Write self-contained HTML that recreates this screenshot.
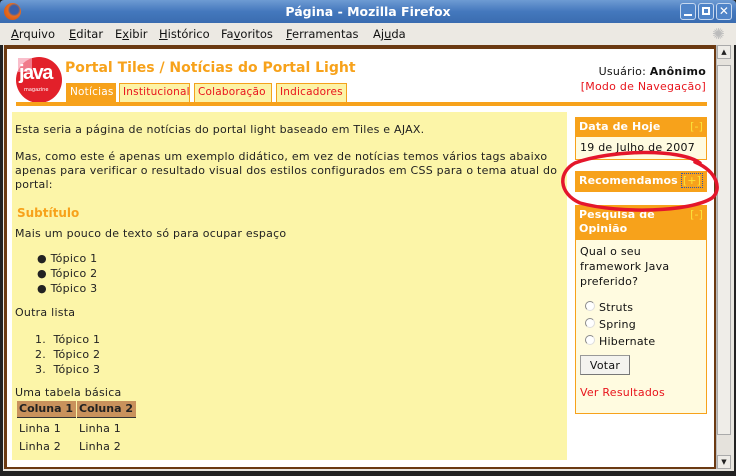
<!DOCTYPE html>
<html><head><meta charset="utf-8">
<style>
*{margin:0;padding:0;box-sizing:border-box}
body{width:736px;height:476px;overflow:hidden;background:#222;font-family:"DejaVu Sans","Liberation Sans",sans-serif;font-size:11px;color:#222;position:relative;letter-spacing:.24px}
.a{position:absolute;white-space:nowrap}
#title{left:0;top:0;width:736px;height:23px;background:linear-gradient(#6e9bd3,#4478bd 50%,#3a6cb0);border-radius:4px 4px 0 0}
#menu{left:0;top:23px;width:736px;height:22px;background:#ece9e3;font-size:11.5px;color:#111;letter-spacing:0}
#menu span{position:absolute;top:4px}
#frame{left:3px;top:45px;width:731px;height:426px;background:#e8e6e0}
#brown{left:4px;top:45px;width:712px;height:424px;background:#6b3a12}
#page{left:7px;top:49px;width:707px;height:418px;background:#fff}
#sb{left:716px;top:45px;width:15px;height:424px;background:#e5e2dc;border-left:1px solid #bbb}
.tab{position:absolute;top:83px;height:19px;background:#fcf3a6;border:1px solid #f3a21c;border-bottom:none;color:#e8141c;font-size:10.5px;padding:2px 0 0 3px;letter-spacing:.2px}
.bh{position:absolute;left:575px;width:132px;background:#f7a21b;color:#fff;font-weight:bold;font-size:11px;padding:3px 4px;letter-spacing:.1px}
.bh i{position:absolute;right:4px;top:3px;font-style:normal;color:#fbe23a;font-weight:normal}
.bb{position:absolute;left:575px;width:132px;background:#fffbe0;border:1px solid #f7a21b;border-top:none}
.btn{position:absolute;left:580px;top:355px;width:50px;height:20px;background:#f4f3ef;border:1px solid #999;border-right-color:#777;border-bottom-color:#777;font-size:11px;text-align:center;padding-top:3px;color:#111}
.rad{position:absolute;left:585px;width:10px;height:10px;border-radius:50%;background:#fff;border:1px solid #888;border-right-color:#ddd;border-bottom-color:#ddd}
</style></head><body>
<div class="a" id="title"></div>
<div class="a" style="left:4px;top:3px;width:17px;height:17px;border-radius:50%;background:radial-gradient(circle at 60% 40%,#3a5fa8 30%,#e86c1e 45%,#c84b10)"></div>
<div class="a" style="left:0;width:736px;top:4px;text-align:center;color:#fff;font-weight:bold;font-size:12.5px;letter-spacing:0">Página - Mozilla Firefox</div>
<div class="a" style="left:680px;top:3px;width:16px;height:17px;border:1px solid #c6d8ef;border-radius:3px;background:#4f84c8"><div style="position:absolute;left:3px;top:10px;width:8px;height:2px;background:#fff"></div></div>
<div class="a" style="left:698px;top:3px;width:16px;height:17px;border:1px solid #c6d8ef;border-radius:3px;background:#4f84c8"><div style="position:absolute;left:3px;top:3px;width:8px;height:8px;border:2px solid #fff"></div></div>
<div class="a" style="left:716px;top:3px;width:16px;height:17px;border:1px solid #c6d8ef;border-radius:3px;background:#4f84c8;color:#fff;font-weight:bold;font-size:12px;text-align:center;line-height:15px">✕</div>
<div class="a" id="menu">
<span style="left:11px"><u>A</u>rquivo</span><span style="left:69px"><u>E</u>ditar</span><span style="left:115px">E<u>x</u>ibir</span><span style="left:159px"><u>H</u>istórico</span><span style="left:221px">Fa<u>v</u>oritos</span><span style="left:286px"><u>F</u>erramentas</span><span style="left:373px">Aj<u>u</u>da</span>
<span style="left:712px;top:2px;color:#bbb;font-size:15px">✺</span>
</div>
<div class="a" id="frame"></div>
<div class="a" id="brown"></div>
<div class="a" id="page"></div>
<div class="a" id="sb"><div style="position:absolute;left:0;top:0;width:14px;height:14px;border:1px solid #aaa;background:#eeece7;font-size:7px;text-align:center;line-height:12px">▲</div>
<div style="position:absolute;left:0;top:20px;width:14px;height:370px;border:1px solid #aaa;background:#efede8"></div>
<div style="position:absolute;left:0;bottom:0;width:14px;height:14px;border:1px solid #aaa;background:#eeece7;font-size:7px;text-align:center;line-height:12px">▼</div></div>

<!-- logo -->
<div class="a" style="left:16px;top:57px;width:46px;height:46px;border-radius:50%;background:#e2202a"></div>
<div class="a" style="left:18px;top:58px;width:14px;height:14px;background:#f7a3b5;opacity:.7"></div>
<div class="a" style="left:19px;top:62px;color:#fff;font-weight:bold;font-size:20px;letter-spacing:-1.5px;font-family:'Liberation Sans',sans-serif">java</div>
<div class="a" style="left:24px;top:87px;color:#fff;font-size:5px;letter-spacing:0">magazine</div>

<div class="a" style="left:65px;top:60px;color:#f7a21b;font-weight:bold;font-size:14px;letter-spacing:0">Portal Tiles / Notícias do Portal Light</div>
<div class="tab" style="left:66px;width:50px;background:#f7a21b;color:#fff">Notícias</div>
<div class="tab" style="left:119px;width:71px">Institucional</div>
<div class="tab" style="left:194px;width:78px">Colaboração</div>
<div class="tab" style="left:276px;width:71px">Indicadores</div>
<div class="a" style="left:16px;top:102px;width:691px;height:4px;background:#f7a21b"></div>
<div class="a" style="right:30px;top:65px;font-size:11px;color:#111">Usuário: <b>Anônimo</b></div>
<div class="a" style="right:30px;top:80px;font-size:11px;color:#e8141c">[Modo de Navegação]</div>

<!-- main -->
<div class="a" style="left:12px;top:112px;width:555px;height:348px;background:#fcf5a8"></div>
<div class="a" style="left:15px;top:123px">Esta seria a página de notícias do portal light baseado em Tiles e AJAX.</div>
<div class="a" style="left:15px;top:150px;line-height:14px">Mas, como este é apenas um exemplo didático, em vez de notícias temos vários tags abaixo<br>apenas para verificar o resultado visual dos estilos configurados em CSS para o tema atual do<br>portal:</div>
<div class="a" style="left:17px;top:206px;color:#f7a21b;font-weight:bold;font-size:12px;letter-spacing:0">Subtítulo</div>
<div class="a" style="left:15px;top:227px">Mais um pouco de texto só para ocupar espaço</div>
<div class="a" style="left:37px;top:251px;line-height:15px">●&nbsp;Tópico 1<br>●&nbsp;Tópico 2<br>●&nbsp;Tópico 3</div>
<div class="a" style="left:15px;top:306px">Outra lista</div>
<div class="a" style="left:35px;top:332px;line-height:15px">1.&nbsp; Tópico 1<br>2.&nbsp; Tópico 2<br>3.&nbsp; Tópico 3</div>
<div class="a" style="left:15px;top:386px">Uma tabela básica</div>
<div class="a" style="left:17px;top:401px;width:59px;height:17px;background:#c9925c;border-bottom:1px solid #333;font-weight:bold;font-size:11px;padding:1px 2px;letter-spacing:0">Coluna 1</div>
<div class="a" style="left:77px;top:401px;width:59px;height:17px;background:#c9925c;border-bottom:1px solid #333;font-weight:bold;font-size:11px;padding:1px 2px;letter-spacing:0">Coluna 2</div>
<div class="a" style="left:19px;top:422px">Linha 1</div><div class="a" style="left:79px;top:422px">Linha 1</div>
<div class="a" style="left:19px;top:440px">Linha 2</div><div class="a" style="left:79px;top:440px">Linha 2</div>

<!-- sidebar -->
<div class="bh" style="top:117px;height:20px">Data de Hoje<i>[-]</i></div>
<div class="bb" style="top:137px;height:23px"><span class="a" style="left:4px;top:4px;color:#111">19 de Julho de 2007</span></div>
<div class="bh" style="top:171px;height:21px">Recomendamos<i style="border:1px dotted #3355aa;padding:0 1px;top:2px">[+]</i></div>
<div class="bh" style="top:205px;height:35px;line-height:14px">Pesquisa de<br>Opinião<i>[-]</i></div>
<div class="bb" style="top:240px;height:174px;line-height:15px;color:#111">
<div class="a" style="left:4px;top:4px">Qual o seu<br>framework Java<br>preferido?</div>
<div class="a" style="left:23px;top:59px;line-height:17px">Struts<br>Spring<br>Hibernate</div>
<div class="a" style="left:4px;top:145px;color:#e8141c">Ver Resultados</div>
</div>
<div class="rad" style="top:301px"></div><div class="rad" style="top:318px"></div><div class="rad" style="top:335px"></div>
<div class="btn">Votar</div>

<svg class="a" style="left:0;top:0" width="736" height="476"><path d="M700 163 C680 148 610 150 575 163 C558 172 558 193 580 203 C620 214 690 212 712 198 C722 190 718 172 695 162" fill="none" stroke="#e4162c" stroke-width="3.5" stroke-linecap="round"/></svg>
</body></html>
